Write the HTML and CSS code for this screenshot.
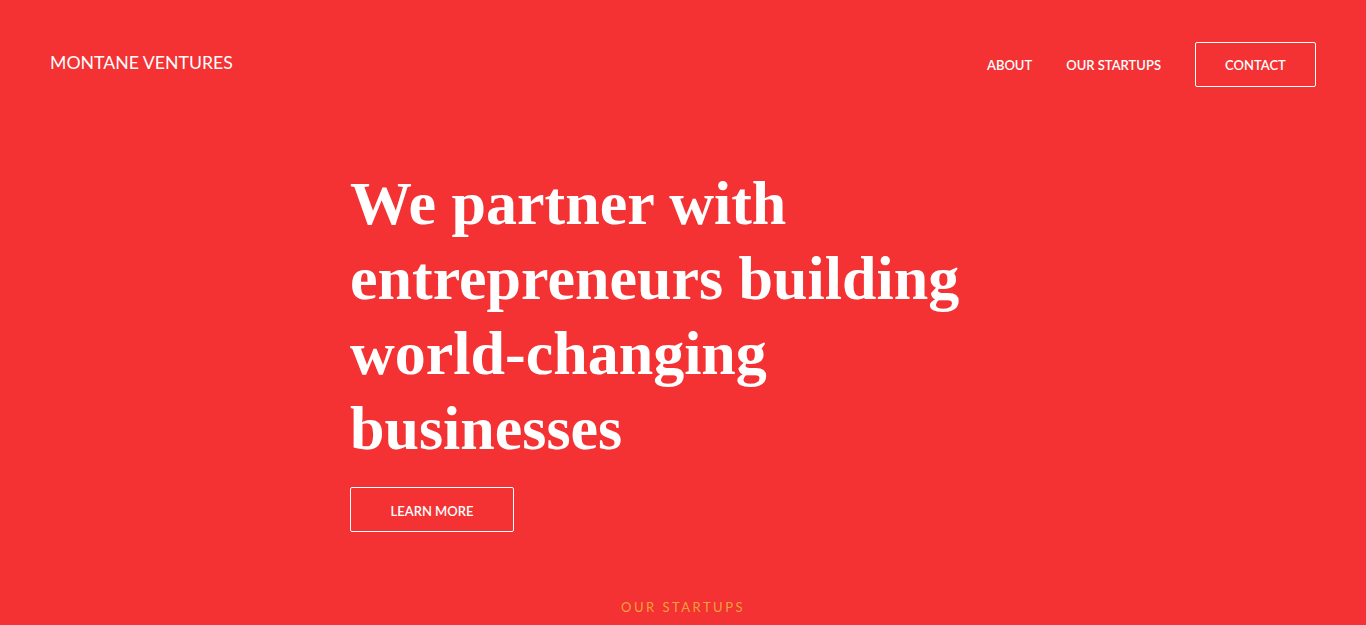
FILE: index.html
```html
<!DOCTYPE html>
<html lang="en">
<head>
<meta charset="utf-8">
<title>Montane Ventures</title>
<link rel="stylesheet" href="styles.css">
</head>
<body>
<div class="page">
  <header class="header">
    <div class="logo">MONTANE VENTURES</div>
    <nav class="nav">
      <a class="nav-link" href="#">ABOUT</a>
      <a class="nav-link" href="#">OUR STARTUPS</a>
      <a class="btn btn-contact" href="#">CONTACT</a>
    </nav>
  </header>
  <section class="hero">
    <div class="hero-inner">
      <h1 class="hero-title">We partner with entrepreneurs building world-changing businesses</h1>
      <a class="btn btn-learn" href="#">LEARN MORE</a>
    </div>
  </section>
  <section class="startups">
    <div class="section-label">OUR STARTUPS</div>
  </section>
</div>
</body>
</html>
```
FILE: styles.css
```css
html, body {
  margin: 0;
  padding: 0;
  background: #f43133;
}
.page {
  font-family: "Lato", "Open Sans", "Liberation Sans", sans-serif;
  color: #fff;
  min-height: 625px;
}
.header {
  display: flex;
  justify-content: space-between;
  align-items: center;
  padding: 42px 50px 0 50px;
  height: 44px;
}
.logo {
  font-size: 17.7px;
  margin-top: -3px;
}
.nav {
  display: flex;
  align-items: center;
}
.nav-link {
  color: #fff;
  text-decoration: none;
  font-size: 13px;
  font-weight: 600;
  margin-right: 34px;
  margin-top: 2px;
}
.btn {
  display: flex;
  align-items: center;
  justify-content: center;
  box-sizing: border-box;
  height: 45px;
  border: 1px solid #fff;
  border-radius: 2px;
  color: #fff;
  text-decoration: none;
  font-size: 13px;
  font-weight: 600;
  padding-top: 2px;
}
.btn-contact {
  width: 121px;
}
.hero {
  display: flex;
  justify-content: center;
  padding-top: 80px;
}
.hero-inner {
  width: 666px;
}
.hero-title {
  margin: 0;
  font-family: "Liberation Serif", "DejaVu Serif", serif;
  font-weight: 700;
  font-size: 62px;
  line-height: 75px;
  width: 640px;
}
.btn-learn {
  width: 164px;
  margin-top: 21px;
}
.startups {
  display: flex;
  justify-content: center;
  padding-top: 67px;
}
.section-label {
  color: #f3a13a;
  font-size: 13px;
  letter-spacing: 2.5px;
}
```
